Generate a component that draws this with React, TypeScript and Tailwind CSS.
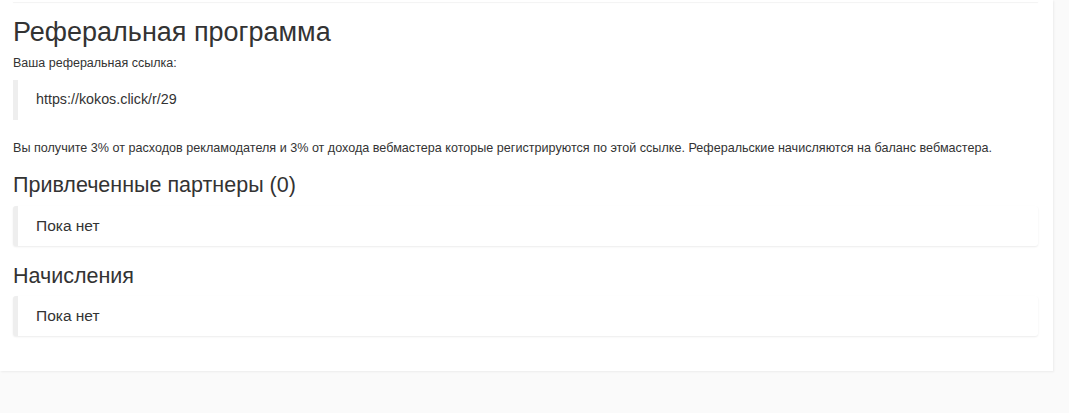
import { FunctionComponent } from "react";

interface EmptyCardProps {
  text: string;
}

const EmptyCard: FunctionComponent<EmptyCardProps> = ({ text }) => {
  return (
    <div className="h-[40px] flex items-center pl-[18px] bg-white border-l-[5px] border-[#eeeeee] rounded-[3px] shadow-[0_1px_2px_rgba(0,0,0,0.08)]">
      <p className="text-[15.5px] text-[#333]">{text}</p>
    </div>
  );
};

export default function App() {
  return (
    <div className="min-h-[413px] bg-[#fafafa] font-['Liberation_Sans',Arial,sans-serif] text-[#333]">
      <div className="w-[1053px] bg-white shadow-[1px_1px_2px_rgba(0,0,0,0.06)] pb-[35px]">
        <div className="ml-[13px] mr-[15px] h-[2px] shadow-[0_1px_1px_rgba(0,0,0,0.05)]"></div>
        <div className="pl-[13px] pr-[15px]">
          <h1 className="text-[27px] leading-[30px] mt-[15px]">Реферальная программа</h1>
          <p className="text-[12.5px] leading-[15px] mt-[9px]">Ваша реферальная ссылка:</p>
          <div className="mt-[9px] h-[40px] flex items-center pl-[18px] border-l-[5px] border-[#eeeeee]">
            <p className="text-[14.3px]">https://kokos.click/r/29</p>
          </div>
          <p className="text-[12.6px] leading-[16px] mt-[20px]">
            Вы получите 3% от расходов рекламодателя и 3% от дохода вебмастера которые регистрируются по этой ссылке. Реферальские начисляются на баланс вебмастера.
          </p>
          <h2 className="text-[21.5px] leading-[26px] mt-[16px]">Привлеченные партнеры (0)</h2>
          <div className="mt-[8px]">
            <EmptyCard text="Пока нет" />
          </div>
          <h2 className="text-[21.5px] leading-[26px] mt-[17px]">Начисления</h2>
          <div className="mt-[7px]">
            <EmptyCard text="Пока нет" />
          </div>
        </div>
      </div>
    </div>
  );
}
